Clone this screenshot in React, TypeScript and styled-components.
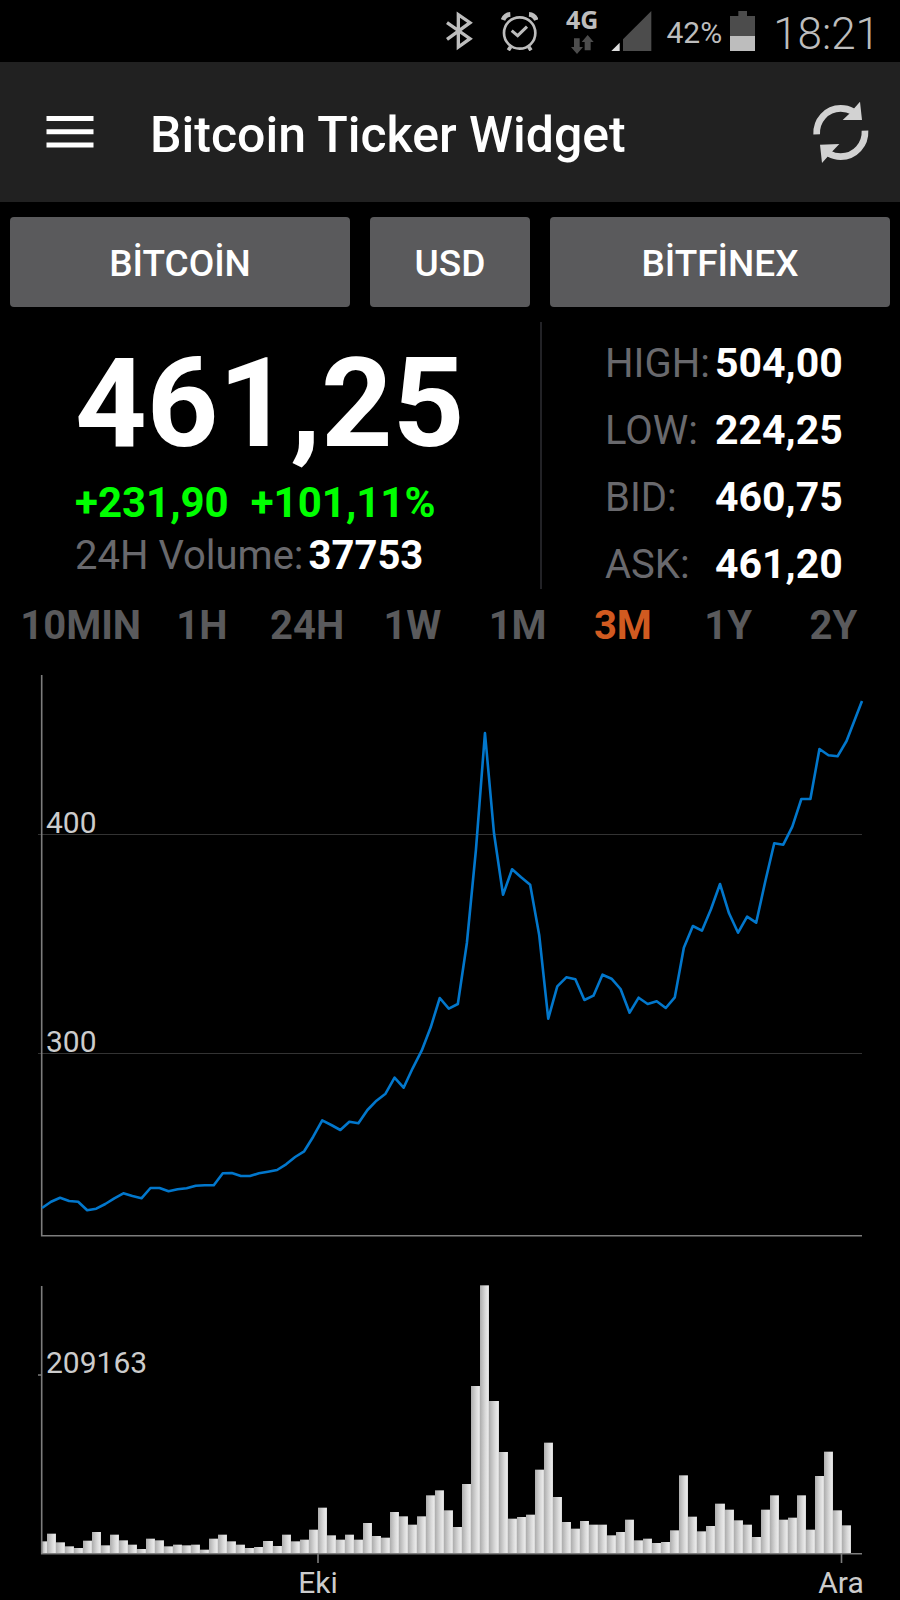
import React, { useState } from "react";
import styled, { createGlobalStyle } from "styled-components";

const GlobalStyle = createGlobalStyle`
  * { box-sizing: border-box; }
  body {
    margin: 0;
    background: #000;
    color: #fff;
    font-family: Roboto, "Liberation Sans", sans-serif;
  }
  button { font-family: inherit; border: 0; padding: 0; cursor: pointer; }
`;

/* One price per day, as heights in the chart's own coordinates. */
const PRICE_Y = [
  1208, 1201.7, 1197.7, 1201, 1201.7, 1210.3, 1208.7, 1204, 1198.3, 1193.3,
  1196, 1198.3, 1188, 1188, 1191.3, 1189.3, 1188.3, 1185.7, 1185.3, 1185.3,
  1173.3, 1173, 1176, 1176, 1173.3, 1171.7, 1170, 1164.3, 1157, 1151.3,
  1136.7, 1120.3, 1125, 1130, 1121.7, 1123.3, 1110, 1100.7, 1093.7, 1077.7,
  1087.7, 1068.3, 1050.7, 1027.3, 998, 1008.7, 1004, 943, 850, 733,
  833.3, 894.7, 869.3, 877.3, 884.7, 935, 1018.7, 986.3, 977.3, 979.3,
  1000, 995.7, 974.7, 978.7, 989, 1012.7, 997.7, 1004, 1001.3, 1008,
  997.3, 947.7, 926, 930.7, 909.3, 884, 913.3, 932.7, 916.7, 922.7,
  881.7, 843.3, 844.7, 826.7, 799, 799, 749, 755.3, 756.3, 741,
];

/* Daily volume, in thirds of a chart unit. */
const VOLUMES = [
  35, 58, 32, 20, 15, 37, 63, 23, 55, 38, 25, 12, 43, 38, 20, 25, 23, 25, 10,
  43, 55, 35, 25, 15, 18, 36, 21, 55, 35, 40, 70, 136, 53, 40, 55, 40, 90, 51,
  46, 123, 110, 85, 110, 173, 188, 128, 78, 207, 501, 803, 456, 303, 103, 108,
  115, 250, 331, 168, 93, 73, 96, 85, 85, 53, 63, 100, 38, 43, 30, 33, 68, 233,
  109, 65, 81, 148, 130, 98, 85, 48, 130, 173, 100, 106, 173, 70, 231, 304,
  128, 83,
];

const DAY = 9.04;
const LEFT = 42;
const RIGHT = 862;
const BASE = 1553;

const StatusBar = styled.div`
  display: flex;
  align-items: center;
  justify-content: flex-end;
  height: 62px;
  padding-right: 20px;
  color: #bdbdbd;
`;

const StatusIcon = styled.svg<{ $gap: number }>`
  flex: none;
  margin-right: ${(p) => p.$gap}px;
`;

const Network = styled.div`
  display: flex;
  flex-direction: column;
  align-items: center;
  gap: 3px;
  margin-right: 13px;
  padding-bottom: 2px;
  font: 700 25px/26px "Open Sans", "Noto Sans", sans-serif;
`;

const BatteryLevel = styled.span`
  margin-right: 8px;
  padding-top: 4px;
  font-size: 30px;
  line-height: 40px;
`;

const Clock = styled.time`
  padding-top: 6px;
  font-size: 44px;
  font-weight: 300;
  line-height: 48px;
`;

const Header = styled.header`
  display: flex;
  align-items: center;
  height: 140px;
  padding: 0 28px 0 42px;
  background: #212121;
`;

const IconButton = styled.button`
  display: flex;
  background: none;
`;

const Title = styled.h1`
  flex: 1;
  margin: 0 0 0 52px;
  padding-top: 5px;
  font-size: 50px;
  font-weight: 500;
  line-height: 60px;
`;

const Selectors = styled.div`
  display: grid;
  grid-template-columns: 17fr 8fr 17fr;
  gap: 20px;
  padding: 15px 10px;
`;

const SelectorButton = styled.button`
  height: 90px;
  padding-top: 3px;
  border-radius: 4px;
  background: #5a5a5c;
  color: #fff;
  font-size: 37px;
  font-weight: 500;
`;

const Summary = styled.section`
  display: grid;
  grid-template-columns: 540fr 360fr;
`;

const PricePanel = styled.div`
  padding: 18px 0 0 75px;
  white-space: nowrap;
`;

const Price = styled.div`
  font-size: 125px;
  font-weight: 700;
  line-height: 128px;
`;

const Change = styled.div`
  display: flex;
  gap: 22px;
  padding-top: 10px;
  color: #00ff00;
  font-size: 42px;
  font-weight: 700;
  line-height: 50px;
`;

const Volume = styled.div`
  display: flex;
  align-items: baseline;
  gap: 5px;
  padding-top: 4px;
  font-size: 40px;
  line-height: 48px;
`;

const Muted = styled.span`
  color: #69696d;
`;

const Stats = styled.dl`
  display: grid;
  grid-template-columns: 110px 1fr;
  grid-auto-rows: 47px;
  row-gap: 20px;
  align-items: baseline;
  margin: 0;
  padding: 18px 0 1px 63px;
  border-left: 2px solid #222226;
  font-size: 40px;
  line-height: 47px;

  dt { color: #69696d; }
  dd { margin: 0; font-size: 41px; font-weight: 700; }
`;

const Periods = styled.nav`
  display: grid;
  grid-template-columns: 137fr repeat(7, 105fr);
  padding: 13px 14px 10px 12px;
`;

const PeriodButton = styled.button<{ $active: boolean }>`
  background: none;
  color: ${(p) => (p.$active ? "#d15a20" : "#5a5a5c")};
  font-size: 40px;
  font-weight: 700;
  line-height: 48px;
`;

const Chart = styled.svg`
  display: block;
  width: 100%;
  height: auto;

  text {
    fill: #cccccc;
    font-size: 30px;
  }
`;

const PERIODS = ["10MIN", "1H", "24H", "1W", "1M", "3M", "1Y", "2Y"];
const STATS = [
  ["HIGH:", "504,00"],
  ["LOW:", "224,25"],
  ["BID:", "460,75"],
  ["ASK:", "461,20"],
];

function StatusIcons() {
  return (
    <>
      <StatusIcon $gap={28} width="27" height="40" viewBox="48 33 81 120" fill="none" stroke="#bdbdbd" strokeWidth="10">
        <path d="M51 68L120 116L85 141V44L120 68L51 118" />
      </StatusIcon>
      <StatusIcon $gap={28} width="37" height="40" viewBox="212 33 111 120" fill="none" stroke="#bdbdbd">
        <circle cx="268" cy="99" r="47" strokeWidth="8" />
        <path d="M244 92L262 107L290 80" strokeWidth="9" />
        <path d="M241 140L234 151M295 140L302 151" strokeWidth="11" />
        <path d="M218 60Q224 44 240 43M318 60Q312 44 296 43" strokeWidth="14" />
      </StatusIcon>
      <Network>
        <span>4G</span>
        <svg width="23" height="19" viewBox="425 101 69 57" fill="#4c4c4c">
          <path d="M434 111h17v26h10l-18 21l-18-21h9zM466 147v-25h-9l18-21l18 21h-9v25z" />
        </svg>
      </Network>
      <StatusIcon $gap={14} width="41" height="40" viewBox="544 33 123 120">
        <path d="M580 153V118L665 33V153z" fill="#4c4c4c" />
        <path d="M545 153L570 128V153z" fill="#dddddd" />
      </StatusIcon>
      <BatteryLevel>42%</BatteryLevel>
      <StatusIcon $gap={18} width="25" height="40" viewBox="897 30 75 120">
        <path d="M897 45h25V30h26v15h24v60h-75z" fill="#4c4c4c" />
        <path d="M897 105h75v45h-75z" fill="#bdbdbd" />
      </StatusIcon>
    </>
  );
}

function PriceChart() {
  const points = PRICE_Y.map((y, i) => `${LEFT + i * DAY},${y}`).concat(`${RIGHT},701`);
  return (
    <Chart viewBox="0 660 900 610" role="img" aria-label="Price, 3 months">
      <path d="M38 834.5H862M38 1053.5H862" stroke="#333333" />
      <path d="M41.7 675V1235.7H862" fill="none" stroke="#7d7d7d" strokeWidth="1.6" />
      <polyline points={points.join(" ")} fill="none" stroke="#0277cc" strokeWidth="2.6" strokeLinejoin="round" />
      <text x="46" y="833">400</text>
      <text x="46" y="1052">300</text>
    </Chart>
  );
}

function VolumeChart() {
  return (
    <Chart viewBox="0 1270 900 330" role="img" aria-label="Volume, 3 months">
      <defs>
        <linearGradient id="bar">
          <stop offset="0" stopColor="#adadad" />
          <stop offset="0.6" stopColor="#dadada" />
          <stop offset="0.85" stopColor="#e8e8e8" />
          <stop offset="1" stopColor="#d4d4d4" />
        </linearGradient>
      </defs>
      {VOLUMES.map((v, i) => {
        const x = Math.max(LEFT, Math.round(LEFT + (i - 0.5) * DAY));
        const end = Math.round(LEFT + (i + 0.5) * DAY);
        return <rect key={i} x={x} y={BASE - v / 3} width={end - x} height={v / 3} fill="url(#bar)" />;
      })}
      <path d="M41.7 1286V1553.7H862M38 1375H42M318 1554V1563M841.5 1554V1563" fill="none" stroke="#7d7d7d" strokeWidth="1.6" />
      <text x="46" y="1373">209163</text>
      <text x="318" y="1593" textAnchor="middle">Eki</text>
      <text x="841" y="1593" textAnchor="middle">Ara</text>
    </Chart>
  );
}

export default function App() {
  const [period, setPeriod] = useState("3M");
  return (
    <>
      <GlobalStyle />
      <StatusBar>
        <StatusIcons />
        <Clock>18:21</Clock>
      </StatusBar>
      <Header>
        <IconButton aria-label="Menu">
          <svg width="56" height="40" viewBox="0 0 56 40" fill="#fff">
            <path d="M4.5 4h47v5h-47zM4.5 17.3h47v5h-47zM4.5 30.6h47v5h-47z" />
          </svg>
        </IconButton>
        <Title>Bitcoin Ticker Widget</Title>
        <IconButton aria-label="Refresh">
          <svg width="62" height="64" viewBox="1140 300 186 192">
            <path d="M1160 403C1158 362 1189 325 1232 325Q1252 325 1268 334M1305 392C1307 433 1276 470 1232 470Q1213 470 1197 461" fill="none" stroke="#d2d2d2" strokeWidth="20" />
            <path d="M1290 305L1296 360H1238L1258 341zM1170 434L1228 432L1208 453L1176 489z" fill="#d2d2d2" />
          </svg>
        </IconButton>
      </Header>
      <main>
        <Selectors>
          <SelectorButton>BİTCOİN</SelectorButton>
          <SelectorButton>USD</SelectorButton>
          <SelectorButton>BİTFİNEX</SelectorButton>
        </Selectors>
        <Summary>
          <PricePanel>
            <Price>461,25</Price>
            <Change>
              <span>+231,90</span>
              <span>+101,11%</span>
            </Change>
            <Volume>
              <Muted>24H Volume:</Muted>
              <strong>37753</strong>
            </Volume>
          </PricePanel>
          <Stats>
            {STATS.map(([label, value]) => (
              <React.Fragment key={label}>
                <dt>{label}</dt>
                <dd>{value}</dd>
              </React.Fragment>
            ))}
          </Stats>
        </Summary>
        <Periods>
          {PERIODS.map((p) => (
            <PeriodButton key={p} $active={p === period} aria-pressed={p === period} onClick={() => setPeriod(p)}>
              {p}
            </PeriodButton>
          ))}
        </Periods>
        <PriceChart />
        <VolumeChart />
      </main>
    </>
  );
}
